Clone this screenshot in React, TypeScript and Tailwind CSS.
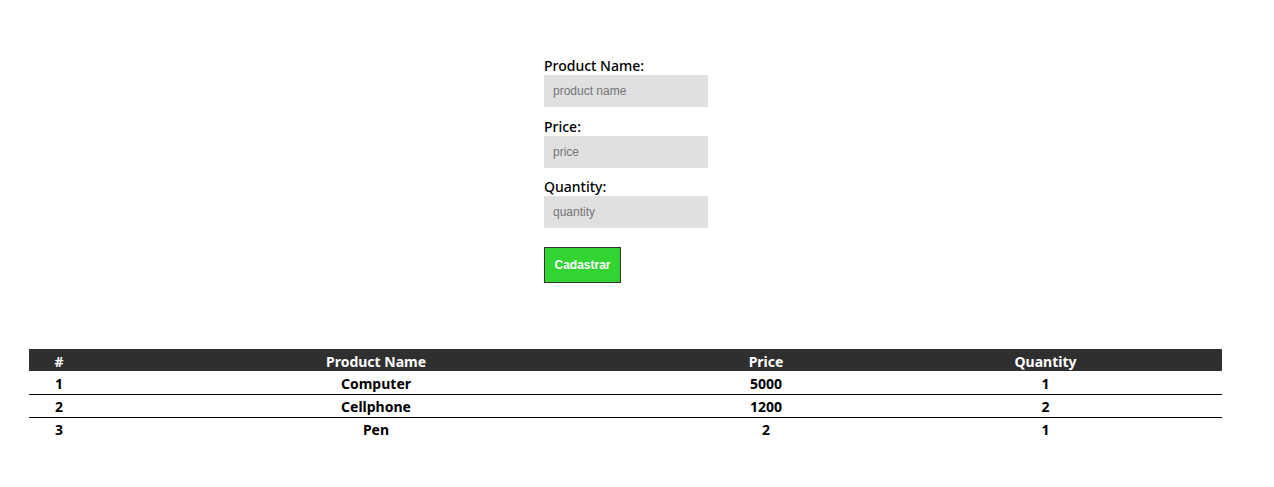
import React from "react";

const rows = [
  ["1", "Computer", "5000", "1"],
  ["2", "Cellphone", "1200", "2"],
  ["3", "Pen", "2", "1"],
];

const seg = { fontFamily: '"Noto Sans", "Open Sans", sans-serif' };
const fields = [
  ["Product Name:", "product name", ""],
  ["Price:", "price", "mt-[10px]"],
  ["Quantity:", "quantity", "mt-[9px]"],
];
const rowCls = ["h-[24px] pt-[2px] border-b border-black", "h-[23px] border-b border-black", "h-[23px]"];

export default function App() {
  return (
    <div className="w-[1274px] h-[487px] bg-white" style={seg}>
      <div className="w-[186px] mx-auto pt-[56px] flex flex-col">
        {fields.map(([l, p, m]) => (
          <div key={l} className={`flex flex-col ${m}`}>
            <label className="text-[14px] leading-[19px] font-medium text-black">{l}</label>
            <input
              placeholder={p}
              className="w-[164px] h-[32px] bg-[#e0e0e0] pl-[9px] text-[12px] outline-none placeholder:text-[#757575]"
              style={{ fontFamily: '"Liberation Sans", Arial, sans-serif' }}
            />
          </div>
        ))}
        <button
          className="mt-[19px] w-[77px] h-[36px] bg-[#32d432] border border-[#333] text-white font-bold text-[12px]"
          style={{ fontFamily: '"Liberation Sans", Arial, sans-serif' }}
        >
          Cadastrar
        </button>
      </div>
      <div className="mt-[66px] ml-[29px] w-[1193px] text-[14px] font-bold">
        <div className="grid grid-cols-[60px_574px_206px_353px] bg-[#2f2f2f] text-white h-[22px] pt-[2px] items-center text-center">
          <div>#</div>
          <div>Product Name</div>
          <div>Price</div>
          <div>Quantity</div>
        </div>
        {rows.map((r, i) => (
          <div
            key={i}
            className={`grid grid-cols-[60px_574px_206px_353px] items-center text-center text-black ${rowCls[i]}`}
          >
            {r.map((c, j) => (
              <div key={j}>{c}</div>
            ))}
          </div>
        ))}
      </div>
    </div>
  );
}
